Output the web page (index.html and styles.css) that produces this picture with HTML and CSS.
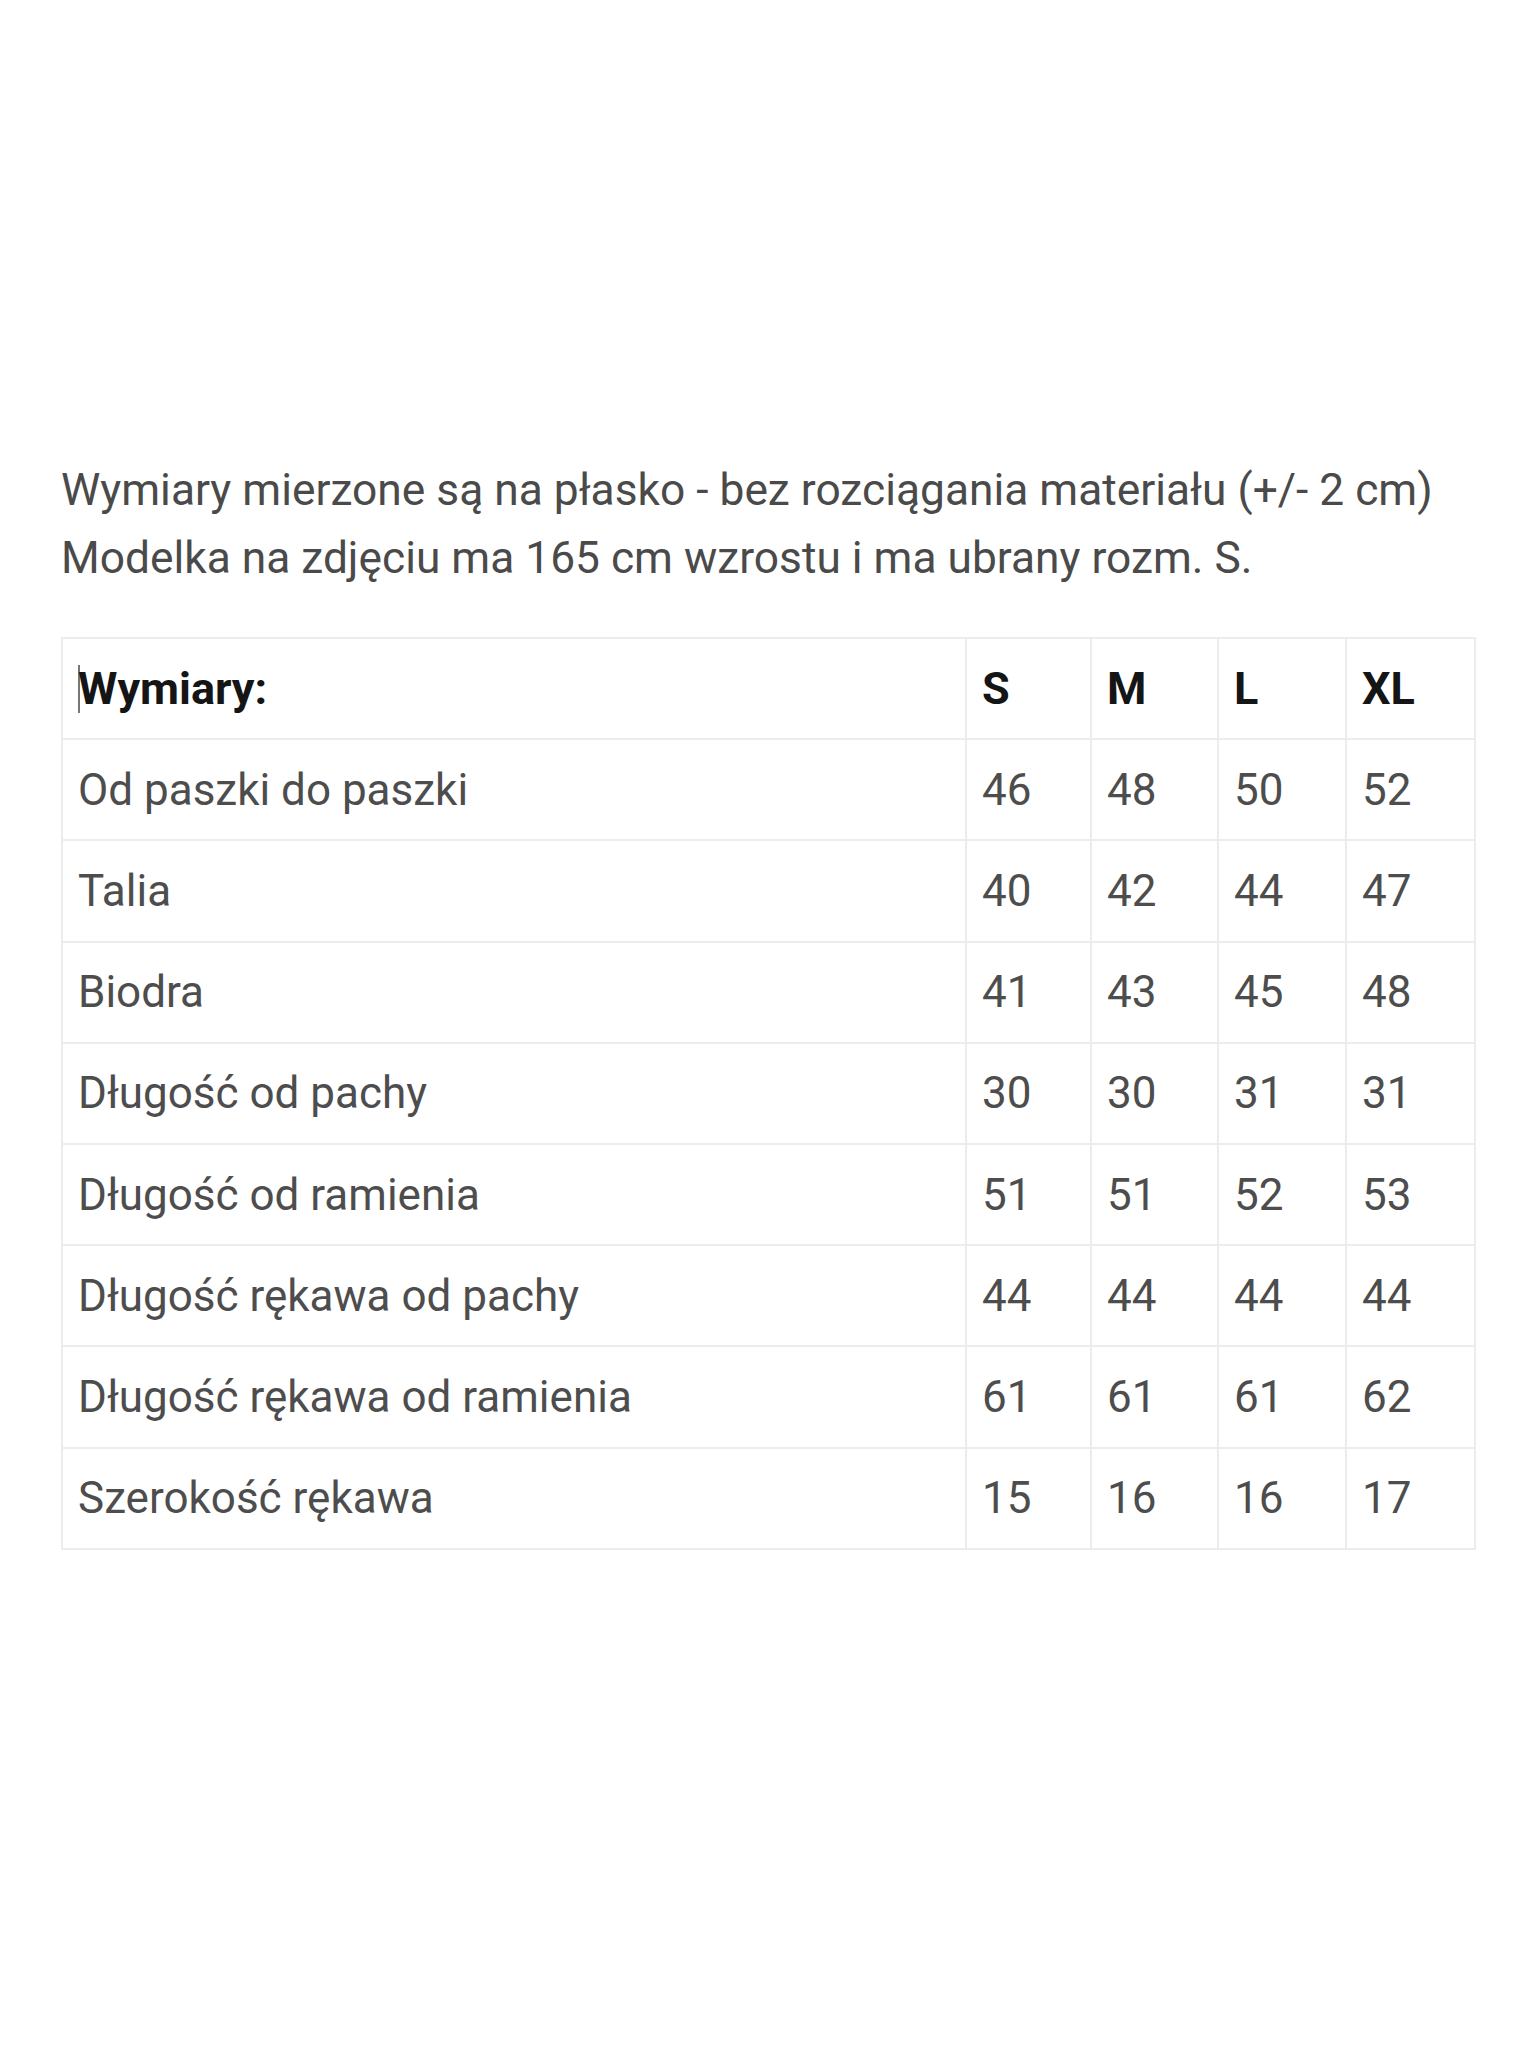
FILE: index.html
```html
<!DOCTYPE html>
<html lang="pl">
<head>
<meta charset="utf-8">
<title>Wymiary</title>
<link rel="stylesheet" href="styles.css">
</head>
<body>
<main class="page">
  <div class="intro">
    <p>Wymiary mierzone są na płasko - bez rozciągania materiału (+/- 2 cm)</p>
    <p>Modelka na zdjęciu ma 165 cm wzrostu i ma ubrany rozm. S.</p>
  </div>
  <table class="sizes">
    <colgroup>
      <col class="c-name"><col class="c-s"><col class="c-m"><col class="c-l"><col class="c-xl">
    </colgroup>
    <thead>
      <tr><th><span class="caret"></span>Wymiary:</th><th>S</th><th>M</th><th>L</th><th>XL</th></tr>
    </thead>
    <tbody>
      <tr><td>Od paszki do paszki</td><td>46</td><td>48</td><td>50</td><td>52</td></tr>
      <tr><td>Talia</td><td>40</td><td>42</td><td>44</td><td>47</td></tr>
      <tr><td>Biodra</td><td>41</td><td>43</td><td>45</td><td>48</td></tr>
      <tr><td>Długość od pachy</td><td>30</td><td>30</td><td>31</td><td>31</td></tr>
      <tr><td>Długość od ramienia</td><td>51</td><td>51</td><td>52</td><td>53</td></tr>
      <tr><td>Długość rękawa od pachy</td><td>44</td><td>44</td><td>44</td><td>44</td></tr>
      <tr><td>Długość rękawa od ramienia</td><td>61</td><td>61</td><td>61</td><td>62</td></tr>
      <tr><td>Szerokość rękawa</td><td>15</td><td>16</td><td>16</td><td>17</td></tr>
    </tbody>
  </table>
</main>
</body>
</html>
```
FILE: styles.css
```css
html, body {
  margin: 0;
  padding: 0;
  background: #ffffff;
}

.page {
  padding: 456px 0 0 61px;
  font-family: Roboto, "Liberation Sans", sans-serif;
  color: #4a4a4a;
}

.intro p {
  margin: 0;
  font-size: 44.3px;
  line-height: 68px;
  white-space: nowrap;
}

.sizes {
  margin-top: 45px;
  width: 1413px;
  border-collapse: collapse;
  table-layout: fixed;
  font-size: 44px;
}

.c-name { width: 904px; }
.c-s { width: 125px; }
.c-m { width: 127px; }
.c-l { width: 128px; }
.c-xl { width: 129px; }

.sizes th,
.sizes td {
  border: 2px solid #ececec;
  height: 99.2px;
  padding: 0 0 0 15px;
  text-align: left;
  vertical-align: middle;
  white-space: nowrap;
}

.sizes th {
  font-size: 45px;
  font-weight: 700;
  color: #151515;
}

.sizes td {
  color: #4d4d4d;
}

.caret {
  display: inline-block;
  width: 2px;
  height: 48px;
  margin-right: -2px;
  background: #777;
  vertical-align: -9px;
}
```
